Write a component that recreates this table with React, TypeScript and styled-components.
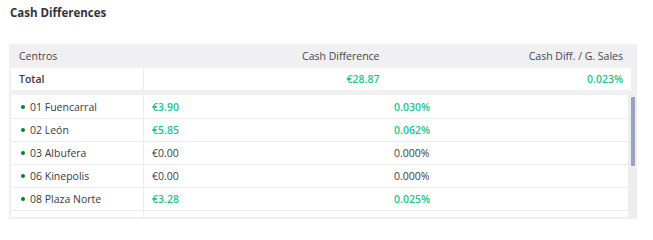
import React from 'react';
import styled, { createGlobalStyle } from 'styled-components';

type Centro = {
  name: string;
  diff: string;
  ratio: string;
  positive: boolean;
};

const centros: Centro[] = [
  { name: '01 Fuencarral', diff: '€3.90', ratio: '0.030%', positive: true },
  { name: '02 León', diff: '€5.85', ratio: '0.062%', positive: true },
  { name: '03 Albufera', diff: '€0.00', ratio: '0.000%', positive: false },
  { name: '06 Kinepolis', diff: '€0.00', ratio: '0.000%', positive: false },
  { name: '08 Plaza Norte', diff: '€3.28', ratio: '0.025%', positive: true },
];

function App() {
  return (
    <>
      <GlobalStyle />
      <Page>
        <Title>Cash Differences</Title>
        <Panel>
          <HeadSection>
            <HeadRow>
              <HeadCell>Centros</HeadCell>
              <HeadCell align="right">Cash Difference</HeadCell>
              <HeadCell align="right">Cash Diff. / G. Sales</HeadCell>
            </HeadRow>
            <TotalRow>
              <TotalCell divider>Total</TotalCell>
              <TotalCell align="right" positive>
                €28.87
              </TotalCell>
              <TotalCell align="right" positive>
                0.023%
              </TotalCell>
            </TotalRow>
          </HeadSection>
          <Body>
            <List>
              {centros.map((c) => (
                <Row key={c.name}>
                  <NameCell>
                    <Dot />
                    {c.name}
                  </NameCell>
                  <Cell positive={c.positive}>{c.diff}</Cell>
                  <Cell positive={c.positive}>{c.ratio}</Cell>
                </Row>
              ))}
              {/* next row peeking in under the fold */}
              <Row peek>
                <NameCell />
                <Cell />
                <Cell />
              </Row>
            </List>
            <ScrollTrack>
              <ScrollThumb />
            </ScrollTrack>
          </Body>
        </Panel>
      </Page>
    </>
  );
}

const GlobalStyle = createGlobalStyle`
  body {
    margin: 0;
    background: #ffffff;
    font-family: "Open Sans", "Liberation Sans", sans-serif;
    color: #3b3b44;
  }
`;

const Page = styled.div`
  padding: 6px 16px 0 9px;
`;

const Title = styled.h2`
  margin: 0 0 0 1px;
  font-size: 11.5px;
  line-height: 14px;
  font-weight: 700;
  color: #333339;
  height: 38px;
`;

const Panel = styled.div`
  background: #f0f0f3;
  padding: 0 0 2px 2px;
`;

const HeadSection = styled.div`
  padding-right: 6px;
`;

const grid = `
  display: grid;
  grid-template-columns: 133px 1fr 1fr;
`;

const HeadRow = styled.div`
  ${grid};
  height: 24px;
  align-items: center;
`;

const HeadCell = styled.div<{ align?: 'left' | 'right' }>`
  font-size: 10.5px;
  font-weight: 500;
  color: #45454d;
  text-align: ${(p) => p.align || 'left'};
  padding: 0 8px;
`;

const TotalRow = styled.div`
  ${grid};
  height: 22px;
  background: #ffffff;
  margin-bottom: 5px;
`;

const TotalCell = styled.div<{ align?: 'left' | 'right'; positive?: boolean; divider?: boolean }>`
  display: flex;
  align-items: center;
  justify-content: ${(p) => (p.align === 'right' ? 'flex-end' : 'flex-start')};
  padding: 0 8px;
  font-size: 10.5px;
  font-weight: 600;
  color: ${(p) => (p.positive ? '#1cc48d' : '#3b3b44')};
  border-right: ${(p) => (p.divider ? '1px solid #ececef' : 'none')};
`;

const Body = styled.div`
  display: flex;
  height: 122px;
  overflow: hidden;
`;

const List = styled.div`
  flex: 1;
  background: #ffffff;
`;

const ScrollTrack = styled.div`
  width: 9px;
  flex-shrink: 0;
  background: #ededf1;
  padding: 2px 2px 0 3px;
  box-sizing: border-box;
`;

const ScrollThumb = styled.div`
  height: 69px;
  background: #9aa0c2;
  border-radius: 1px;
`;

const Row = styled.div<{ peek?: boolean }>`
  ${grid};
  height: ${(p) => (p.peek ? '6px' : '23px')};
  border-bottom: ${(p) => (p.peek ? 'none' : '1px solid #ececef')};
  box-sizing: border-box;
  &:first-child {
    height: 24px;
  }
`;

const NameCell = styled.div`
  display: flex;
  align-items: center;
  gap: 5px;
  padding-left: 10px;
  font-size: 10.5px;
  font-weight: 500;
  color: #3b3b44;
  border-right: 1px solid #ececef;
`;

const Dot = styled.span`
  width: 4px;
  height: 4px;
  border-radius: 50%;
  background: #0e7a3e;
`;

const Cell = styled.div<{ positive?: boolean }>`
  display: flex;
  align-items: center;
  padding-left: 8px;
  font-size: 10.5px;
  font-weight: ${(p) => (p.positive ? 600 : 500)};
  color: ${(p) => (p.positive ? '#1cc48d' : '#3b3b44')};
`;

export default App;
